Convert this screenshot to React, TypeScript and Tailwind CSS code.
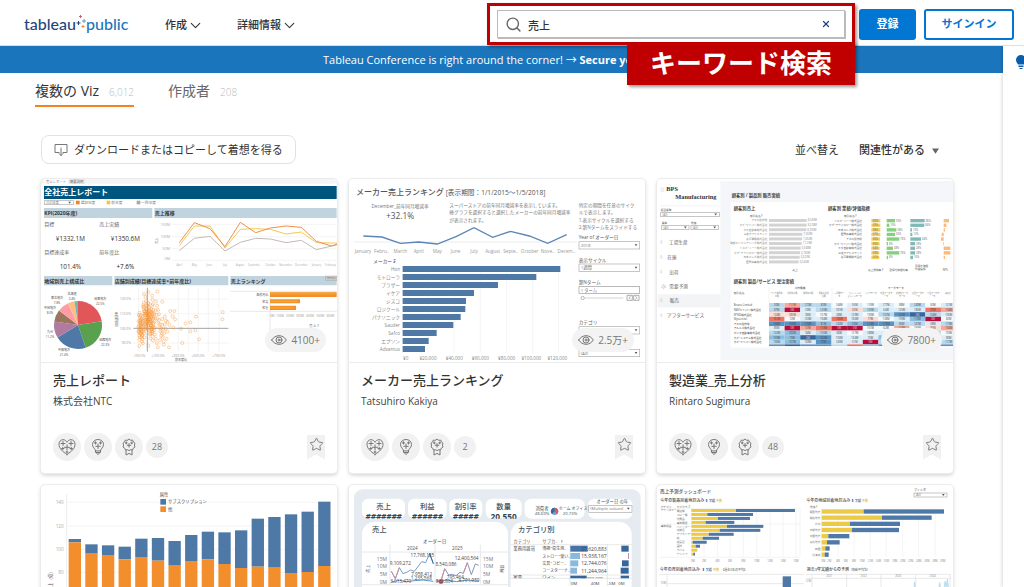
import React, { useState } from 'react';
import { ChevronDown, Search, Star, X } from 'lucide-react';

type Anchor = 'start' | 'middle' | 'end';
type Row = [number, number, string];

interface WordsProps {
  rows: Row[];
  size: number;
  fill?: string;
  anchor?: Anchor;
  weight?: number;
}

// Small chart labels that share one style
function Words({ rows, size, fill = '#777', anchor = 'start', weight = 400 }: WordsProps) {
  return (
    <g fontSize={size} fill={fill} textAnchor={anchor} fontWeight={weight}>
      {rows.map(([x, y, text], i) => <text key={i} x={x} y={y}>{text}</text>)}
    </g>
  );
}

function Dropdown({ x, y, w, h, text = '' }: { x: number; y: number; w: number; h: number; text?: string }) {
  return (
    <g>
      <rect x={x} y={y} width={w} height={h} fill="#fff" stroke="#aaa" strokeWidth={2} />
      <text x={x + 5} y={y + h / 2 + (h > 18 ? 5 : 3)} fontSize={h > 18 ? 13 : 9} fill="#777">{text}</text>
      <path d={`M${x + w - 15} ${y + h / 2 - 3}h8l-4 6z`} fill="#555" />
    </g>
  );
}

function Chart({ box, label, children }: { box: string; label: string; children: React.ReactNode }) {
  return (
    <svg viewBox={box} role="img" aria-label={label} className="block w-full">
      {children}
    </svg>
  );
}

const toPoints = (xs: number[], ys: number[]) => xs.map((x, i) => `${x},${ys[i]}`).join(' ');

const pieSlices: [number, string][] = [
  [22.5, '#e15759'], [22.3, '#59a14f'], [21.4, '#4e79a7'], [11.2, '#b07aa1'],
  [8, '#9c755f'], [7.8, '#ff9da7'], [4.4, '#ffbe7d'], [2.4, '#76b7b2'],
];

function Pie({ cx, cy, r }: { cx: number; cy: number; r: number }) {
  let turn = 0;
  return (
    <g>
      {pieSlices.map(([share, fill]) => {
        const a = (turn / 100) * 2 * Math.PI;
        turn += share;
        const b = (turn / 100) * 2 * Math.PI;
        return (
          <path key={fill} fill={fill}
            d={`M${cx} ${cy}L${cx + r * Math.sin(a)} ${cy - r * Math.cos(a)}A${r} ${r} 0 0 1 ${cx + r * Math.sin(b)} ${cy - r * Math.cos(b)}Z`} />
        );
      })}
    </g>
  );
}

// Stores: a dense group near the left edge and a thin tail to the right
const stores = Array.from({ length: 180 }, (_, i) => {
  const a = (i * 0.618034) % 1;
  const b = (i * 0.754878 + 0.3) % 1;
  const c = (i * 0.569840 + 0.7) % 1;
  const spread = (b + c + ((i * 0.38) % 1)) / 3 - 0.5;
  return { x: 295 + a * 46 + (i % 3 === 0 ? c * 55 : 0), y: 442 + spread * 190 };
}).concat([
  { x: 325, y: 352 }, { x: 312, y: 357 }, { x: 352, y: 350 }, { x: 367, y: 380 }, { x: 391, y: 408 },
  { x: 398, y: 424 }, { x: 403, y: 408 }, { x: 405, y: 433 }, { x: 400, y: 457 }, { x: 423, y: 461 },
  { x: 437, y: 445 }, { x: 451, y: 442 }, { x: 451, y: 469 }, { x: 466, y: 466 }, { x: 468, y: 425 },
  { x: 477, y: 493 }, { x: 427, y: 504 }, { x: 387, y: 517 }, { x: 371, y: 509 }, { x: 548, y: 411 },
  { x: 547, y: 433 }, { x: 382, y: 470 }, { x: 388, y: 450 }, { x: 360, y: 495 }, { x: 298, y: 513 }, { x: 325, y: 512 },
]);

function SalesReport() {
  const xs = [418, 463, 510, 555, 601, 647, 691, 738, 784, 829, 875, 892];
  return (
    <Chart box="3 12 888 549" label="全社売上レポート">
      <rect x="3" y="12" width="888" height="14" fill="#f4f4f4" />
      <path d="M12 12h72v14H12z" fill="#fff" />
      <path d="M86 12h48v14H86z" fill="#e6e6e6" />
      <Words size={10} rows={[[18, 23, '売上レポート'], [90, 23, '概要説明']]} />
      <rect x="12" y="33" width="878" height="39" fill="#00557f" />
      <Words size={24} fill="#fff" weight={700} rows={[[13, 61, '全社売上レポート']]} />
      <Dropdown x={13} y={77} w={87} h={12} text="2020年度" />
      <rect x="108" y="77" width="11" height="11" fill="#f5811f" />
      <rect x="200" y="77" width="11" height="11" fill="#efc63c" />
      <rect x="290" y="77" width="11" height="11" fill="#b6a3a3" />
      <Words size={11} rows={[[122, 87, '選択年度'], [214, 87, '前年度'], [304, 87, '一昨年度']]} />
      <path d="M12 99h325v30H12zM343 99h547v30H343zM12 303h205v28H12zM223 303h342v28H223zM571 303h319v28H571z" fill="#c0d4df" />
      <Words size={15} fill="#333" weight={700} rows={[
        [13, 120, 'KPI(2020年度)'], [344, 120, '売上推移'], [13, 323, '地域別売上構成比'],
        [224, 323, '店舗別成績(目標達成率×前年度比)'], [572, 323, '売上ランキング'],
      ]} />
      <rect x="857" y="303" width="34" height="14" fill="#ccc" stroke="#999" />
      <Words size={7} fill="#555" rows={[[860, 313, 'カテゴリ']]} />
      <Words size={15} fill="#666" rows={[[13, 153, '目標'], [178, 153, '売上実績'], [13, 236, '目標達成率'], [178, 236, '前年度比']]} />
      <Words size={19} fill="#333" anchor="middle" rows={[[91, 198, '¥1332.1M'], [256, 198, '¥1350.6M'], [91, 281, '101.4%']]} />
      <Words size={19} fill="#222" anchor="middle" weight={500} rows={[[256, 281, '+7.6%']]} />

      {/* Monthly sales */}
      <path d="M395 148H890M395 185H890M395 221H890M395 256H890" stroke="#eee" strokeWidth={2} />
      <Words size={11} fill="#aaa" anchor="end" rows={[[390, 152, '150M'], [390, 189, '100M'], [390, 226, '50M'], [390, 256, '0M']]} />
      <text fontSize={10} fill="#777" transform="translate(354 207) rotate(-90)">売上</text>
      <g fill="none" strokeWidth={3}>
        <polyline stroke="#c4b9b7" points={toPoints(xs, [227, 190, 184, 228, 202, 190, 192, 203, 196, 224, 213, 209])} />
        <polyline stroke="#f1ca52" points={toPoints(xs, [212, 153, 153, 219, 163, 161, 163, 177, 171, 203, 204, 204])} />
        <polyline stroke="#f28e4b" points={toPoints(xs, [203, 143, 161, 215, 142, 173, 159, 153, 157, 199, 213, 207])} />
      </g>
      <Words size={8} fill="#aaa" anchor="middle" rows={[
        [418, 272, 'April'], [463, 272, 'May'], [508, 272, 'June'], [555, 272, 'July'], [600, 272, 'August'], [643, 272, 'Septemb..'],
        [692, 272, 'October'], [737, 272, 'November'], [784, 272, 'December'], [829, 272, 'January'], [871, 272, 'February'],
      ]} />

      <Pie cx={114} cy={450} r={72} />
      <Words size={9} fill="#444" anchor="middle" rows={[
        [96, 359, '北海道'], [96, 374, '2.4%'], [51, 373, '東北地方'], [51, 388, '7.8%'], [30, 403, '中国地方'], [30, 418, '8.0%'],
        [30, 475, '九州'], [30, 490, '11.2%'], [72, 529, '中部地方'], [72, 544, '21.4%'], [181, 376, '関東地方'], [181, 391, '22.5%'],
        [196, 497, '関西地方'], [196, 512, '22.3%'],
      ]} />

      {/* Stores */}
      <path d="M280 372H565M280 416H565M280 504H565M296 338V530M415 338V530M445 338V530M475 338V530M505 338V530M537 338V530" stroke="#eee" strokeWidth={2} />
      <path d="M280 460H565M322 338V530" stroke="#777" strokeWidth={2} />
      <g fill="none" stroke="#f5902f" strokeOpacity={0.6} strokeWidth={2}>
        {stores.map((s, i) => <circle key={i} cx={s.x} cy={s.y} r={4.5} />)}
      </g>
      <Words size={10} fill="#999" anchor="end" rows={[[273, 376, '120.0%'], [273, 420, '110.0%'], [273, 464, '100.0%'], [273, 508, '90.0%']]} />
      <Words size={10} fill="#999" anchor="middle" rows={[[297, 545, '-100.0%'], [354, 545, '+100.0%'], [414, 545, '+300.0%'], [474, 545, '+500.0%'], [536, 545, '+700.0%']]} />
      <Words size={9} fill="#555" rows={[[405, 558, '前年度比']]} />
      <text fontSize={9} fill="#555" transform="translate(233 455) rotate(-90)">目標達成率</text>

      {/* Category ranking */}
      <path d="M571 349H890M571 409H890M690 349V470" stroke="#ddd" strokeWidth={2} />
      <path d="M690 352H890V366H690zM690 373H780V385H690zM690 392H768V405H690z" fill="#f28e2b" />
      <path d="M690 356H886M690 379H772M690 398H760" stroke="#f5a32b" strokeWidth={5} />
      <Words size={9} anchor="end" rows={[[685, 363, '事務用品'], [685, 383, '家電'], [685, 402, '家具']]} />
      <Words size={9} fill="#999" anchor="middle" rows={[[697, 425, '0M'], [720, 425, '100M'], [750, 425, '200M'], [780, 425, '300M'], [810, 425, '400M'], [841, 425, '500M'], [871, 425, '600M']]} />
      <Words size={11} rows={[[807, 456, '売上 ₣']]} />
    </Chart>
  );
}

const makers: [string, number][] = [
  ['Hon', 641], ['モトローラ', 569], ['ブラザー', 454], ['イケア', 382], ['シスコ', 358], ['ロジクール', 356],
  ['パナソニック', 342], ['Sauder', 320], ['Safco', 270], ['エプソン', 246], ['Advantus', 235],
];

function MakerRanking() {
  return (
    <Chart box="7 12 888 549" label="メーカー売上ランキング">
      <Words size={24} fill="#555" weight={500} rows={[[28, 59, 'メーカー売上ランキング']]} />
      <Words size={20} fill="#555" rows={[[297, 59, '[表示期間：1/1/2015〜1/5/2018]']]} />
      <Words size={14} anchor="middle" rows={[[160, 99, 'December_前年同月増減率']]} />
      <Words size={25} fill="#555" anchor="middle" rows={[[160, 133, '+32.1%']]} />
      <Words size={14} rows={[
        [308, 97, 'スーパーストアの前年同月増減率を表示しています。'], [308, 118, '棒グラフを選択すると選択したメーカーの前年同月増減率'], [308, 140, 'が表示されます。'],
        [696, 97, '特定の期間を任意のサイク'], [696, 118, 'ルで表示します。'], [696, 140, '1.表示サイクルを選択する'], [696, 162, '2.第Nタームをスライドする'],
      ]} />
      <path d="M22 201H690" stroke="#e4e4e4" strokeWidth={2} />
      <polyline fill="none" stroke="#5b86b5" strokeWidth={4}
        points="50,183 106,186 161,205 216,201 272,207 328,185 382,158 438,187 492,169 548,183 603,205 660,179" />
      <Words size={14} fill="#999" anchor="middle" rows={[
        [49, 233, 'January'], [105, 233, 'Febru..'], [161, 233, 'March'], [216, 233, 'April'], [272, 233, 'May'], [327, 233, 'June'],
        [382, 233, 'July'], [438, 233, 'August'], [492, 233, 'Septe..'], [549, 233, 'October'], [603, 233, 'Nove..'], [659, 233, 'Decem..'],
      ]} />
      <Words size={14} fill="#444" rows={[[80, 263, 'メーカー ₣']]} />
      <path d="M168 270V534M244 270V534M322 270V534M401 270V534M480 270V534M558 270V534M636 270V534" stroke="#eee" strokeWidth={2} />
      {makers.map(([name, end], i) => (
        <g key={name}>
          <rect x={168} y={273 + i * 24} width={end - 168} height={18} fill="#4e79a7" />
          <text x={160} y={287 + i * 24} fontSize={14} fill="#888" textAnchor="end">{name}</text>
        </g>
      ))}
      <Words size={14} fill="#888" anchor="middle" rows={[
        [177, 555, '¥0'], [244, 555, '¥20,000'], [323, 555, '¥40,000'], [401, 555, '¥60,000'], [480, 555, '¥80,000'], [554, 555, '¥100,000'], [632, 555, '¥120,000'],
      ]} />
      <Words size={14} fill="#555" rows={[[696, 193, 'Year of オーダー日'], [696, 260, '表示サイクル'], [696, 328, '第Nターム'], [696, 448, 'カテゴリ']]} />
      <Dropdown x={697} y={200} w={182} h={22} text="2018" />
      <Dropdown x={697} y={267} w={182} h={22} text="1週間" />
      <rect x="697" y="335" width="182" height="20" fill="#fff" stroke="#999" strokeWidth={2} />
      <Words size={13} rows={[[702, 350, '1 ターム']]} />
      <path d="M714 369H830" stroke="#bbb" strokeWidth={2} />
      <circle cx="708" cy="369" r="5" fill="#fff" stroke="#999" strokeWidth={2} />
      <path d="M841 361h16v15h-16zM861 361h16v15h-16zM852 364l-5 4 5 5M866 364l5 4-5 5" fill="none" stroke="#888" strokeWidth={2} />
      <Dropdown x={697} y={455} w={182} h={22} />
      <Dropdown x={697} y={523} w={182} h={22} text="(All)" />
    </Chart>
  );
}

const customers = ['アスロ製作所', 'ホズ･ジャパン株式会社', 'ホタ自動車株式会社', '三友不アシスティド', '東戸電機株式会社', '磯部エンジニアリング株式会社', 'イスズ･ハーツ株式会社', 'ホガ･テクニロジー株式会社', '日本スレズ株式会社', '菱野商事株式会社'];
const customerEnds = [456, 456, 455, 443, 442, 441, 438, 436, 435, 432];
const customerSales = ['8,240M', '8,228M', '8,000M', '7,560M', '7,452M', '7,123M', '6,948M', '6,760M', '6,623M', '6,542M'];
const scores: [number, number, number, number][] = [
  [27, 25, 43, 16], [27, 8, 42, 8], [27, 29, 5, 4], [27, 25, 6, -6], [26, 38, 32, -8], [25, 4, 14, -2], [25, 19, 14, 20], [24, 38, 14, 20], [24, 4, 8, 4],
];
const buyers = ['Brozco Limited', 'PASFジャパン株式会社', 'KPISO株式会社', 'Glyceenitel', 'アスロ製作所', 'アルルゴ株式会社', 'ホリタ自動車株式会社', 'ホズ･システム株式会社', 'ホズ･ジャパン株式会社'];
const heatRows = ['bsbbwlwlwbwl', 'bRlblpblllrs', 'pplwllwbBNbl', 'rwllrlpwlcRw', 'BBBcbcBBbblb', 'lRsrRRwwswps', 'bclblwllwlbw', 'ccNBlllcclbl', 'bclBllRbblcb', 'BNBBbrcBccBB'];
const heatFills: Record<string, string> = {
  w: '#f5fafd', l: '#dcedf7', b: '#b9d9ed', c: '#8fbfe0', B: '#5b93c4', N: '#35679d', p: '#fcdcd4', s: '#f6a99a', r: '#ee7463', R: '#b50f3d',
};

// The view counter lies over the lower right cells, so they carry no value
const underCounter = (r: number, c: number) => r >= 6 && c >= 7 && c <= 10;

function Manufacturing() {
  return (
    <Chart box="7 12 888 549" label="製造業 販売実績">
      <rect x="197" y="18" width="698" height="537" fill="#f4f6f9" />
      <rect x="228" y="81" width="667" height="437" fill="#fff" />
      <g fontFamily="Liberation Serif, serif" fontWeight={700} fill="#333">
        <text x="35" y="49" fontSize={19}>BPS</text>
        <text x="62" y="72" fontSize={19}>Manufacturing</text>
      </g>
      <path d="M20 39h7v10h-7zM18 197h4v8h-4zM18 242h4v8h-4zM18 286h4v8h-4zM18 417h4v8h-4z" fill="none" stroke="#bbb" />
      <path d="M18 92H192" stroke="#eee" strokeWidth={2} />
      <Words size={8} fill="#444" rows={[[18, 107, '担当業務'], [21, 147, '業種'], [109, 147, '地域']]} />
      <Dropdown x={18} y={112} w={176} h={13} text="(All)" />
      <Dropdown x={21} y={151} w={82} h={13} text="(All)" />
      <Dropdown x={109} y={151} w={82} h={13} text="(All)" />
      <rect x="9" y="358" width="188" height="39" fill="#f2f4f6" />
      <path d="M18 372h4v8h-4z" fill="none" stroke="#bbb" />
      <Words size={14} fill="#666" rows={[[43, 206, '工場生産'], [38, 251, '在庫'], [44, 296, '出荷'], [44, 340, '需要予測'], [45, 382, '販売'], [37, 427, 'アフターサービス']]} />
      <g fill="none" strokeWidth={2}>
        <circle cx="27" cy="335" r="6" stroke="#e9a58a" strokeDasharray="4 3" />
        <circle cx="27" cy="335" r="3" stroke="#8ea6cf" strokeDasharray="3 2" />
      </g>
      <Words size={13} fill="#444" weight={700} rows={[[231, 67, '顧客別 / 製品別 販売実績'], [237, 105, '顧客別売上'], [520, 105, '顧客別 業績/評価指標'], [237, 324, '顧客別 製品/サービス 受注実績']]} />
      <Words size={8} fill="#555" rows={[[286, 126, '取引先名 ₣'], [413, 287, '売上'], [568, 126, '取引先名 ₣'], [640, 287, '売上達成率 ₣'], [704, 287, '目標を除粗利率'], [781, 275, '目標を除粗'], [781, 286, '利益指標'], [864, 287, 'NPS'], [237, 356, '取引先名']]} />
      {customers.map((name, i) => (
        <g key={name} fontSize={8} fill="#888">
          <rect x={343} y={132 + i * 13.8} width={customerEnds[i] - 343} height={9} fill="#d3d3d3" />
          <text x={338} y={139 + i * 13.8} textAnchor="end">{name}</text>
          <text x={customerEnds[i] + 3} y={139 + i * 13.8}>{customerSales[i]}</text>
        </g>
      ))}
      {scores.map(([y, g, t, o], i) => {
        const top = 132 + i * 13.8;
        return (
          <g key={i} fontSize={8} fill="#666">
            <text x={622} y={top + 8} textAnchor="end">{customers[(i + 6) % 10]}</text>
            <rect x={650} y={top} width={y} height={10} fill="#f1cf63" />
            <rect x={696} y={top} width={g} height={10} fill="#86cf7e" />
            <rect x={767} y={top} width={t} height={10} fill="#80bab6" />
            <rect x={o < 0 ? 867 + o : 867} y={top} width={Math.abs(o)} height={10} fill="#fdb87b" />
            <text x={654} y={top + 8}>{`${60 - i}%`}</text>
            <text x={699 + g} y={top + 8}>{`${g * 2}%`}</text>
            <text x={770 + t} y={top + 8}>{`${t * 2}%`}</text>
          </g>
        );
      })}
      <Words size={8} fill="#444" rows={[[420, 343, '工作機械'], [700, 343, 'サーボモータ']]} />
      <Words size={6} fill="#888" anchor="middle" rows={[
        [366, 356, 'ワイヤ放電加'], [366, 367, '工機'], [413, 356, '切削加工機'], [460, 356, '放電加工機'], [507, 356, '電動射出成'], [507, 367, '形機'], [554, 356, 'AC同期モー'],
        [554, 367, 'タ'], [600, 356, 'ビルトインス'], [600, 367, 'ピンドルモータ'], [648, 356, 'リニアモータ'], [695, 356, '中型サーボモ'], [695, 367, 'ータ'], [742, 356, '低慣性サーボ'],
        [742, 367, 'モータ'], [789, 356, '大型サーボモ'], [789, 367, 'ータ'], [836, 356, '小型サーボモ'], [836, 367, 'ータ'], [880, 356, '高精度'],
      ]} />
      <path d="M343 335V384M532 335V384" stroke="#ddd" />
      {heatRows.map((row, r) => (
        <g key={r} fontSize={8}>
          {r < 9 && <text x={237} y={394 + r * 13.8} fill="#444">{buyers[r]}</text>}
          {row.split('').map((tone, c) => {
            const dark = tone === 'R' || tone === 'N';
            return (
              <g key={c}>
                <rect x={343 + c * 46.9} y={384 + r * 13.8} width={46.9} height={r < 9 ? 13.8 : 5} fill={heatFills[tone]} />
                {r < 9 && !underCounter(r, c) && (
                  <text x={366 + c * 46.9} y={394 + r * 13.8} textAnchor="middle" fill={dark ? '#f2c5cf' : '#444'}>
                    {dark ? '0M' : `${50 + ((r * 37 + c * 61) % 150)}M`}
                  </text>
                )}
              </g>
            );
          })}
        </g>
      ))}
    </Chart>
  );
}

const subscription = [169, 185, 188, 192, 168, 166, 175, 157, 147, 149, 143, 108, 103, 95, 87, 57];
const others = [179, 213, 219, 230, 223, 234, 249, 235, 230, 244, 256, 252, 255, 271, 268, 250];

function Subscriptions() {
  return (
    <Chart box="3 7 888 549" label="属性別売上">
      <path d="M80 59H872M80 130H872M80 200H872M80 269H872" stroke="#eee" strokeWidth={2} />
      <path d="M80 35V540" stroke="#e4e4e4" strokeWidth={2} />
      <Words size={14} fill="#aaa" anchor="end" rows={[[71, 64, '140'], [71, 135, '120'], [71, 204, '100'], [71, 274, '80']]} />
      <text fontSize={13} fill="#555" transform="translate(36 325) rotate(-90)">売上（億）</text>
      <rect x="361" y="49" width="17" height="17" fill="#4e79a7" />
      <rect x="361" y="71" width="17" height="17" fill="#f28e2b" />
      <Words size={13} fill="#555" rows={[[359, 39, '属性'], [384, 62, 'サブスクリプション'], [384, 84, '他']]} />
      {subscription.map((top, i) => (
        <g key={i}>
          <rect x={86 + i * 49.9} y={top} width={37} height={others[i] - top} fill="#4e79a7" />
          <rect x={86 + i * 49.9} y={others[i]} width={37} height={540 - others[i]} fill="#f28e2b" />
        </g>
      ))}
    </Chart>
  );
}

const products: [string, string, number, number][] = [
  ['清掃･衛生用..', '27,620,883', 52, 22], ['ストロー･使い..', '15,938,167', 29, 2], ['文具･コピー..', '12,744,076', 24, 20], ['コースター･ナ..', '11,244,964', 20, 24],
];

function SalesSummary() {
  return (
    <Chart box="7 7 888 549" label="売上サマリー">
      <defs>
        <clipPath id="kpi-row"><rect x="22" y="40" width="860" height="68" /></clipPath>
        <clipPath id="table-end"><rect x="492" y="270" width="363" height="17" /></clipPath>
      </defs>
      <rect x="22" y="20" width="860" height="560" rx="26" fill="#e5ebf0" />
      <g fill="#fff">
        <rect x="46" y="48" width="129" height="60" rx="20" />
        <rect x="184" y="48" width="116" height="60" rx="20" />
        <rect x="308" y="48" width="99" height="60" rx="20" />
        <rect x="417" y="48" width="108" height="60" rx="20" />
        <rect x="534" y="48" width="180" height="60" rx="20" />
        <rect x="724" y="48" width="134" height="60" rx="20" />
        <rect x="46" y="117" width="438" height="460" rx="38" />
        <rect x="492" y="117" width="363" height="460" rx="38" />
      </g>
      <Words size={22} fill="#3c5560" weight={500} anchor="middle" rows={[[111, 78, '売上'], [242, 78, '利益'], [357, 78, '割引率'], [471, 78, '数量']]} />
      <g clipPath="url(#kpi-row)" fontStyle="italic">
        <Words size={24} fill="#2c454f" weight={700} anchor="middle" rows={[[111, 112, '#######'], [242, 112, '######'], [357, 112, '#####']]} />
      </g>
      <g clipPath="url(#kpi-row)">
        <Words size={25} fill="#2c454f" weight={700} anchor="middle" rows={[[471, 112, '20,550']]} />
      </g>
      <Words size={13} fill="#3c5560" anchor="middle" rows={[[586, 81, '消費者'], [586, 98, '48.69%'], [670, 98, '20.73%'], [797, 60, 'オーダー日 の年']]} />
      <Words size={12} fill="#3c5560" rows={[[636, 81, 'ホーム オフィス']]} />
      <circle cx="624" cy="86" r="11" fill="#6da5d8" />
      <path d="M624 86V75A11 11 0 0 1 630 95Z" fill="#e15759" />
      <path d="M624 86V75A11 11 0 0 0 616 94Z" fill="#35679d" />
      <Dropdown x={726} y={68} w={130} h={21} text="(Multiple values)" />
      <Words size={22} fill="#3c5560" weight={500} rows={[[76, 147, '売上'], [514, 147, 'カテゴリ別']]} />
      <path d="M46 208H484M46 306H484M130 186V306M265 186V306M401 186V306" stroke="#ddd" strokeWidth={2} />
      <Words size={14} fill="#555" anchor="middle" rows={[[264, 180, 'オーダー日'], [197, 203, '2024'], [332, 203, '2025']]} />
      <Words size={15} anchor="end" rows={[[121, 234, '15M'], [121, 257, '10M'], [121, 281, '5M'], [121, 304, '0M']]} />
      <Words size={15} rows={[[409, 234, '15M'], [409, 257, '10M'], [409, 281, '5M'], [409, 304, '0M']]} />
      <text fontSize={12} fill="#555" transform="translate(70 270) rotate(-90)">売上</text>
      <text fontSize={12} fill="#555" transform="translate(471 270) rotate(-90)">利益</text>
      <g fill="none" strokeWidth={3}>
        <polyline stroke="#6ea0cb" points="134,266 146,288 158,255 169,273 182,268 192,262 203,266 214,252 225,237 237,240 249,213 260,243" />
        <polyline stroke="#8993ba" points="270,291 282,298 294,258 306,277 317,275 328,279 340,269 350,272 362,240 374,276 386,244 396,248" />
        <path d="M134 266l12 22 12-33M270 291l12 7 12-40M350 272l12-32" stroke="#d58a9d" />
        <path d="M249 213l11 30" stroke="#35679d" />
        <polyline stroke="#5b93c4" points="134,298 158,293 180,297 203,294 230,292 260,296" />
        <polyline stroke="#5b93c4" points="270,297 300,292 330,297 362,292 396,296" />
      </g>
      <circle cx="283" cy="297" r="7" fill="#dc5555" />
      <Words size={14} fill="#444" anchor="middle" rows={[
        [161, 248, '9,109,272'], [227, 224, '17,768,185'], [298, 251, '8,540,086'], [360, 233, '12,400,564'], [225, 279, '7,958,412'], [224, 291, '1,235,568'],
        [162, 302, '3,013,470'], [293, 302, '633,804'], [326, 288, '795,464'], [367, 297, '4,791,959'],
      ]} />
      <Words size={13} fill="#555" rows={[[500, 180, 'カテゴリ'], [587, 180, 'サブカ..'], [642, 180, '₣'], [500, 202, '業務用雑貨']]} />
      <path d="M492 186H855M492 277H855M492 287H855M670 186V310M782 186V310" stroke="#ddd" strokeWidth={2} />
      {products.map(([name, sales, w, profit], i) => (
        <g key={name} fontSize={15} fill="#444">
          <rect x={671} y={189 + i * 22} width={w} height={18} fill={i === 0 ? '#4673a8' : '#8bb9dd'} />
          <rect x={846 - profit} y={189 + i * 22} width={profit} height={18} fill={i === 1 ? '#a15c8f' : '#35679d'} />
          <text x={587} y={203 + i * 22} fontSize={12}>{name}</text>
          <text x={780} y={204 + i * 22} textAnchor="end">{sales}</text>
        </g>
      ))}
      <g clipPath="url(#table-end)">
        <rect x="671" y="279" width="49" height="18" fill="#35679d" />
        <rect x="822" y="279" width="25" height="18" fill="#35679d" />
        <Words size={13} fill="#444" rows={[[500, 290, '家電'], [587, 290, 'ワイン'], [702, 292, '26,303,338']]} />
      </g>
      <Words size={13} fill="#444" rows={[[672, 308, '0M'], [732, 308, '40M'], [783, 308, '-5M'], [815, 308, '0M']]} />
    </Chart>
  );
}

const productBars: [string, number, number][] = [
  ['電話機', 244, 421], ['コピー機', 158, 295], ['付属品', 190, 286], ['事務機器', 153, 239], ['バインダー', 217, 326], ['収納具', 195, 317],
  ['アプライアンス', 162, 237], ['紙', 144, 193], ['文房具', 114, 156], ['画材', 123, 136], ['ラベル', 128, 128], ['クリップ', 116, 121],
];
const areaBars: [string, number, number][] = [
  ['関西地方', 627, 868], ['関東地方', 682, 831], ['九州', 586, 736], ['中部地方', 592, 733], ['中国地方', 521, 584], ['東北地方', 517, 555], ['四国', 512, 525], ['北海道', 510, 522],
];

function Forecast() {
  return (
    <Chart box="7 7 888 549" label="売上予測ダッシュボード">
      <Words size={14} fill="#555" weight={500} rows={[[16, 30, '売上予測ダッシュボード']]} />
      <Words size={12} fill="#444" weight={500} rows={[[17, 57, '今年の製品別着地見込み'], [455, 57, '今年の地域別着地見込み'], [15, 265, '今年の月別着地見込み'], [456, 265, '過去3年実績からの予測']]} />
      <Words size={9} fill="#4e79a7" weight={700} rows={[[154, 57, '▍実績'], [592, 57, '▍実績'], [144, 265, '▍実績']]} />
      <Words size={9} fill="#e2b93b" weight={700} rows={[[183, 57, '予測'], [621, 57, '予測'], [174, 265, '予測']]} />
      <Words size={9} fill="#555" rows={[[200, 265, '【過去3年の平均】'], [589, 265, '(移動平均法)'], [778, 26, 'フィルタ']]} />
      <Dropdown x={778} y={31} w={99} h={12} text="(All)" />
      <Words size={8} fill="#666" rows={[[18, 75, 'カテゴリ'], [66, 75, 'サブカテ..₣'], [466, 75, '地域 ₣'], [18, 86, 'テクノロジー'], [18, 133, '事務用品']]} />
      <path d="M15 77H436V224H15M15 124H436M148 77V224M188 77V224M226 77V224M266 77V224M306 77V224M346 77V224M385 77V224M424 77V224" fill="none" stroke="#eee" strokeWidth={2} />
      {productBars.map(([name, forecast, end], i) => (
        <g key={name}>
          <text x={66} y={87 + i * 11.9} fontSize={8} fill="#777">{name}</text>
          <rect x={110} y={79 + i * 11.9} width={forecast - 110} height={9} fill="#edc948" />
          <rect x={forecast} y={79 + i * 11.9} width={end - forecast} height={9} fill="#4e79a7" />
        </g>
      ))}
      <path d="M500 77V224M550 77V224M598 77V224M647 77V224M695 77V224M744 77V224M792 77V224M841 77V224" stroke="#eee" strokeWidth={2} />
      {areaBars.map(([name, forecast, end], i) => (
        <g key={name}>
          <text x={497} y={90 + i * 18.5} fontSize={8} fill="#777" textAnchor="end">{name}</text>
          <rect x={501} y={80 + i * 18.5} width={forecast - 501} height={13} fill="#edc948" />
          <rect x={forecast} y={80 + i * 18.5} width={end - forecast} height={13} fill="#4e79a7" />
        </g>
      ))}
      <Words size={8} fill="#888" anchor="middle" rows={[
        [115, 237, '0M'], [148, 237, '2M'], [188, 237, '4M'], [226, 237, '6M'], [266, 237, '8M'], [306, 237, '10M'], [346, 237, '12M'], [385, 237, '14M'], [424, 237, '16M'],
        [506, 237, '0M'], [524, 237, '2M'], [550, 237, '4M'], [573, 237, '6M'], [598, 237, '8M'], [622, 237, '10M'], [647, 237, '12M'], [671, 237, '14M'],
        [695, 237, '16M'], [720, 237, '18M'], [744, 237, '20M'], [768, 237, '22M'], [792, 237, '24M'], [817, 237, '26M'], [841, 237, '28M'], [864, 237, '30M'],
      ]} />
      <path d="M15 275H448M37 275V540M37 303H448M455 275H888M472 275V540M576 275V540M679 275V540M783 275V540M455 287H888M886 275V540" stroke="#ddd" strokeWidth={2} />
      <Words size={8} fill="#888" anchor="middle" rows={[[26, 304, '10M'], [461, 298, '12M'], [524, 283, '2021'], [627, 283, '2022'], [731, 283, '2023'], [834, 283, '2024']]} />
      <rect x="384" y="281" width="25" height="259" fill="#4e79a7" />
      <path d="M778 320l2-22 2 22M852 320l3-20 3 20M868 320l3-24 4 12 3-18 4 30" fill="#cce6f5" stroke="#a5d3ec" strokeWidth={2} />
    </Chart>
  );
}

interface Viz {
  chart: React.ReactNode;
  title?: string;
  author?: string;
  views?: string;
  likes?: number;
}

const vizzes: Viz[] = [
  { chart: <SalesReport />, title: '売上レポート', author: '株式会社NTC', views: '4100+', likes: 28 },
  { chart: <MakerRanking />, title: 'メーカー売上ランキング', author: 'Tatsuhiro Kakiya', views: '2.5万+', likes: 2 },
  { chart: <Manufacturing />, title: '製造業_売上分析', author: 'Rintaro Sugimura', views: '7800+', likes: 48 },
  { chart: <Subscriptions /> },
  { chart: <SalesSummary /> },
  { chart: <Forecast /> },
];

const iconLine = { fill: 'none', stroke: 'currentColor', strokeWidth: 1, strokeLinejoin: 'round' as const, strokeLinecap: 'round' as const };

function HeartIcon() {
  return (
    <svg viewBox="0 0 18 18" className="size-[18px]" {...iconLine}>
      <path d="M9 16.5C4.500 13.500 1 10.500 1 6.200 1 3.500 2.800 1.700 5 1.700c1.800 0 3.200 1 4 2.600.8-1.600 2.200-2.600 4-2.600 2.200 0 4 1.800 4 4.500 0 4.300-3.500 7.300-8 10.300z" />
      <path d="M5 3.500v4M3 5.500h4M13 3.500v4M11 5.500h4M9 6.800v5M6.500 9.300h5M4.800 9.300v2.400M3.600 10.500h2.400M13.200 9.300v2.400M12 10.500h2.400M9 13v2M8 14h2" />
    </svg>
  );
}

function BulbIcon() {
  return (
    <svg viewBox="0 0 18 18" className="size-[18px]" {...iconLine}>
      <path d="M6.500 12.500C6.500 10.800 3.500 9.800 3.500 6.500 3.500 3.500 6 1.500 9 1.500s5.500 2 5.500 5c0 3.300-3 4.300-3 6zM6.500 12.500v2h5v-2M7.500 14.500c0 2.500 3 2.500 3 0" />
      <path d="M9 6v4.500M6.800 8.300h4.400M6.500 3.800v2.200M5.400 4.900h2.200M11.500 3.800v2.200M10.400 4.900h2.200" />
    </svg>
  );
}

function AwardIcon() {
  return (
    <svg viewBox="0 0 18 18" className="size-[18px]" {...iconLine}>
      <path d="M9 1.200l1.700 1.100 2-.2.700 1.900 1.600 1.200-.6 1.900.6 1.900-1.700 1.200-.7 1.700-2-.1L9 12.500l-1.600-.7-2 .1-.7-1.700L3 9l.6-1.900L3 5.200 4.600 4l.7-1.900 2 .2z" />
      <path d="M6 12v5l3-1.600L12 17v-5M9 5.500v3.600M7.200 7.300h3.600M6.300 4v1.800M5.400 4.900h1.800M11.700 4v1.800M10.800 4.900h1.800" />
    </svg>
  );
}

function EyeIcon() {
  return (
    <svg viewBox="0 0 16 10" className="h-[10px] w-4" {...iconLine}>
      <path d="M.7 5C2.600 2 5.200.7 8 .7S13.400 2 15.300 5C13.400 8 10.800 9.300 8 9.300S2.600 8 .7 5z" />
      <circle cx="8" cy="5" r="3" />
      <circle cx="8" cy="5" r="1" />
    </svg>
  );
}

function VizCard({ viz }: { viz: Viz }) {
  return (
    <article className="min-h-[294px] overflow-hidden rounded bg-white ring-1 ring-[#ececec] shadow-[0_2px_4px_rgba(0,0,0,0.2)]">
      <div className="relative border-b border-[#ececec]">
        {viz.chart}
        {viz.views && (
          <div className="absolute right-[11px] bottom-[10px] flex h-6 items-center gap-1 rounded-full bg-[#f3f3f3] px-[6px] text-[10px] text-[#777]">
            <EyeIcon />
            {viz.views}
          </div>
        )}
      </div>
      {viz.title && (
        <div className="px-3 pt-[7px] pb-3">
          <h2 className="truncate text-[13px] leading-5 font-medium text-[#333]">{viz.title}</h2>
          <a href="#author" className="mt-[3px] block text-[10px] leading-4 text-[#444]">{viz.author}</a>
          <div className="mt-6 flex h-7 items-center text-[#777]">
            <div className="flex gap-[3px]">
              <button aria-label="いいね" className="grid size-7 place-items-center rounded-full bg-[#f1f1f1]"><HeartIcon /></button>
              <button aria-label="アイデア" className="grid size-7 place-items-center rounded-full bg-[#f1f1f1]"><BulbIcon /></button>
              <button aria-label="表彰" className="grid size-7 place-items-center rounded-full bg-[#f1f1f1]"><AwardIcon /></button>
              <span className="grid size-[22px] place-items-center self-center rounded-full bg-[#f1f1f1] text-[9px]">{viz.likes}</span>
            </div>
            <button aria-label="お気に入り"
              className="ml-auto flex h-[25px] w-[18px] justify-center bg-[#f1f1f1] pt-[2px] [clip-path:polygon(0_0,100%_0,100%_100%,50%_80%,0_100%)]">
              <Star size={15} strokeWidth={1.5} className="shrink-0" />
            </button>
          </div>
        </div>
      )}
    </article>
  );
}

function Logo() {
  return (
    <a href="#home" aria-label="Tableau Public" className="flex w-[105px] items-center font-['Lato',sans-serif] text-base leading-5 font-medium">
      <span className="text-[#1f457e]">tableau</span>
      <svg viewBox="0 0 10 20" className="h-5 w-[10px] shrink-0" fill="none">
        <path d="M4.500 1v3M3 2.500h3" stroke="#d95b6b" />
        <path d="M2.500 7v4M.5 9h4" stroke="#1f457e" />
        <path d="M8 5v4M6 7h4" stroke="#5b9bd5" />
        <path d="M7 11v3M5.500 12.500h3" stroke="#e8853a" />
      </svg>
      <span className="text-[#1b75bc]">public</span>
    </a>
  );
}

export default function App() {
  const [query, setQuery] = useState('売上');

  return (
    <div className="flex h-screen flex-col overflow-hidden bg-white font-['Open_Sans','Noto_Sans_CJK_JP',sans-serif] text-[11px] text-[#333]">
      {/* Header */}
      <header className="relative z-10 flex h-[46px] shrink-0 items-center border-b border-[#ddd] bg-white pt-[3px] pr-[10px] pl-6">
        <Logo />
        <nav className="ml-9 flex gap-[33px] pt-[2px] font-medium">
          <button className="flex items-center">作成<ChevronDown size={17} strokeWidth={1.5} /></button>
          <button className="flex items-center">詳細情報<ChevronDown size={17} strokeWidth={1.5} /></button>
        </nav>
        <form onSubmit={e => e.preventDefault()}
          className="relative mr-1 ml-auto w-[368px] border-[3px] border-[#c00000] px-[7px] py-1 shadow-[2px_2px_3px_rgba(0,0,0,0.4)]">
          <div className="flex h-7 items-center border border-[#bbb] bg-white px-[7px] shadow-[1px_1px_0_#bbb]">
            <Search size={17} strokeWidth={2} className="text-[#666]" />
            <input aria-label="検索" value={query} onChange={e => setQuery(e.target.value)}
              className="ml-[6px] h-full min-w-0 flex-1 pt-px font-medium outline-none" />
            <button type="button" aria-label="クリア" onClick={() => setQuery('')} className="mr-[6px] text-[#1f457e]">
              <X size={10} strokeWidth={3} />
            </button>
          </div>
          <div className="absolute top-full -right-[3px] flex h-[43px] w-[228px] items-center justify-center bg-[#c00000] text-[26px] font-bold whitespace-nowrap text-white shadow-[2px_2px_3px_rgba(0,0,0,0.4)]">
            キーワード検索
          </div>
        </form>
        <button className="mr-2 h-[31px] w-[57px] rounded-[3px] bg-[#0176d3] font-bold text-white">登録</button>
        <button className="h-[31px] w-[90px] rounded-[3px] border-2 border-[#0176d3] bg-white font-bold text-[#0176d3]">サインイン</button>
      </header>

      <div className="flex min-h-0 flex-1">
        <main className="min-w-0 flex-1">
          <p className="h-[27px] bg-[#1b75bc] pl-[323px] leading-[27px] whitespace-nowrap text-white">
            Tableau Conference is right around the corner! → <a href="#conference" className="font-bold">Secure your spot</a>
          </p>

          {/* Result tabs */}
          <div className="flex gap-[34px] pl-[35px] text-sm">
            <button className="flex h-[34px] items-center gap-[10px] border-b-2 border-[#f5811f] pt-[3px]">
              複数の Viz <span className="pt-[3px] text-[10px] font-light text-[#bbb]">6,012</span>
            </button>
            <button className="flex h-[34px] items-center gap-[10px] pt-px text-[#666]">
              作成者 <span className="pt-[3px] text-[10px] font-light text-[#bbb]">208</span>
            </button>
          </div>

          <div className="pr-[50px] pl-[41px]">
            {/* Filter and sort */}
            <div className="mt-7 flex h-[29px] items-center">
              <button className="flex h-full items-center gap-[6px] rounded-lg border border-[#e2e2e2] px-3 pt-px text-[#333]">
                <svg viewBox="0 0 14 14" className="size-[14px] text-[#777]" {...iconLine}>
                  <path d="M5 9.500H1v-8h12v8H9M7 5v7.500M5 10.500l2 2 2-2" />
                </svg>
                ダウンロードまたはコピーして着想を得る
              </button>
              <div className="relative mr-3 ml-auto flex items-center gap-5 pt-[2px]">
                <label htmlFor="sort">並べ替え</label>
                <select id="sort" className="w-[82px] appearance-none font-medium">
                  <option>関連性がある</option>
                  <option>閲覧数</option>
                </select>
                <svg viewBox="0 0 8 6" className="pointer-events-none absolute right-[2px] h-[6px] w-[7px]" fill="#666"><path d="M0 0h8L4 6z" /></svg>
              </div>
            </div>

            {/* Results */}
            <div className="mt-[15px] grid grid-cols-3 gap-3">
              {vizzes.map((viz, i) => <VizCard key={i} viz={viz} />)}
            </div>
          </div>
        </main>

        <aside className="w-[21px] shrink-0 overflow-hidden bg-white pt-2 pl-[12px] shadow-[-1px_0_3px_rgba(0,0,0,0.15)]">
          <svg viewBox="0 0 12 16" className="h-4 w-3" fill="#0b5cab">
            <path d="M6 1a5 5 0 0 0-5 5c0 2 1.300 3 2 4.500h6C9.700 9 11 8 11 6a5 5 0 0 0-5-5zM3.500 11.500h5V13h-5zM4.500 14h3v1h-3z" />
          </svg>
        </aside>
      </div>
    </div>
  );
}
